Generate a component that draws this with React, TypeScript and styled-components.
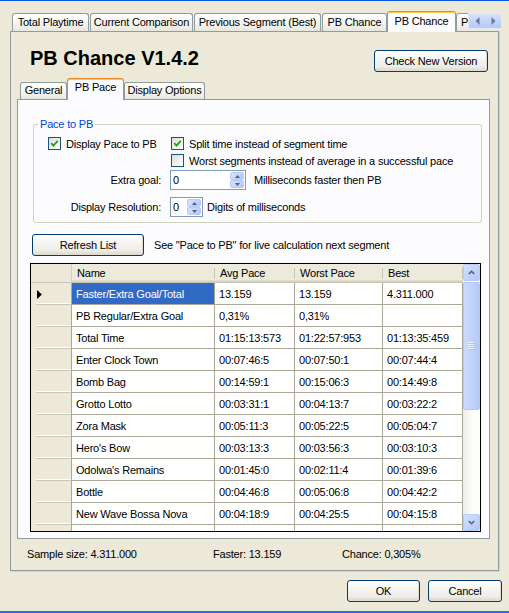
import React from "react";
import styled, { createGlobalStyle } from "styled-components";

const GlobalStyle = createGlobalStyle`
  html, body { margin: 0; padding: 0; background: #ECE9D8; }
  body {
    font-family: "Liberation Sans", Arial, sans-serif;
    font-size: 11px;
    letter-spacing: -0.2px;
    color: #000;
  }
  * { box-sizing: border-box; }
`;

const Window = styled.div`
  width: 509px;
  height: 613px;
  border-top: 1px solid #0A5AE6;
  border-bottom: 2px solid #2A6CEB;
  padding: 10px 10px 0 10px;
  display: flex;
  flex-direction: column;
  overflow: hidden;
  background: #ECE9D8;
`;

/* ---------- outer tabs ---------- */
const TabRow = styled.div`
  display: flex;
  height: 20px;
  margin: 0 -3px 0 2px;
  position: relative;
  z-index: 2;
`;

const TabViewport = styled.div`
  flex: 1;
  display: flex;
  align-items: flex-end;
  overflow: hidden;
  height: 21px;
  margin-bottom: -1px;
`;

const OuterTab = styled.div<{ $active?: boolean; $w?: number; $left?: boolean }>`
  flex: 0 0 auto;
  width: ${(p) => (p.$w ? `${p.$w}px` : "auto")};
  height: ${(p) => (p.$active ? 21 : 18)}px;
  margin: ${(p) => (p.$active ? "0 0 0 -1px" : "0 1px 1px 0")};
  padding: ${(p) => (p.$active ? "1px 0 0" : "0")} ${(p) => (p.$left ? "4px" : "0")};
  border: 1px solid #919b9c;
  border-bottom: none;
  border-top-color: ${(p) => (p.$active ? "#E68B2C" : "#919b9c")};
  border-radius: 3px 3px 0 0;
  background: ${(p) =>
    p.$active
      ? "#FCFCFE"
      : "linear-gradient(#FFFFFF 0%, #F7F7F4 45%, #EEEDE7 80%, #E6E5DE 100%)"};
  box-shadow: ${(p) => (p.$active ? "inset 0 1px 0 #FFC73C" : "none")};
  text-align: ${(p) => (p.$left ? "left" : "center")};
  line-height: 17px;
  white-space: nowrap;
`;

const TabScroller = styled.div`
  flex: 0 0 34px;
  height: 16px;
  margin-top: 2px;
  display: flex;
  border: 1px solid #E4EAF8;
  background: #C8D6F7;
`;

const ScrollerBtn = styled.div`
  flex: 1;
  display: flex;
  align-items: center;
  justify-content: center;
  background: linear-gradient(#D7E1FA, #C2D2F6 60%, #B7CAF3);
`;

/* ---------- outer panel ---------- */
const OuterPanel = styled.div`
  height: 540px;
  border: 1px solid #919b9c;
  background: #ECE9D8;
  display: flex;
  flex-direction: column;
  box-shadow: 1px 1px 0 #D7D4C6;
`;

const Header = styled.div`
  display: flex;
  justify-content: space-between;
  align-items: flex-start;
  height: 24px;
  margin: 14px 10px 0 19px;
`;

const Title = styled.h1`
  margin: 0;
  font-size: 20px;
  line-height: 24px;
  font-weight: bold;
  letter-spacing: 0;
`;

const Button = styled.div<{ $w: number; $mt?: number; $ml?: number }>`
  flex: 0 0 auto;
  width: ${(p) => p.$w}px;
  height: 22px;
  margin-top: ${(p) => p.$mt ?? 0}px;
  margin-left: ${(p) => p.$ml ?? 0}px;
  border: 1px solid #003C74;
  border-radius: 3px;
  background: linear-gradient(#FFFFFF 0%, #F5F4F0 45%, #ECEBE6 80%, #D9D4C9 100%);
  box-shadow: inset -1px -1px 0 #E0DDD3;
  display: flex;
  align-items: center;
  justify-content: center;
  white-space: nowrap;
`;

/* ---------- inner tabs ---------- */
const InnerControl = styled.div`
  margin: 8px 8px 0 6px;
  display: flex;
  flex-direction: column;
`;

const InnerStrip = styled.div`
  display: flex;
  align-items: flex-end;
  height: 21px;
  padding-left: 3px;
  position: relative;
  z-index: 1;
`;

const InnerTab = styled.div<{ $active?: boolean; $w: number }>`
  flex: 0 0 auto;
  width: ${(p) => p.$w}px;
  height: ${(p) => (p.$active ? 22 : 17)}px;
  margin-bottom: ${(p) => (p.$active ? -1 : 0)}px;
  padding-top: ${(p) => (p.$active ? 1 : 0)}px;
  border: 1px solid #919b9c;
  border-bottom: none;
  border-top-color: ${(p) => (p.$active ? "#E68B2C" : "#919b9c")};
  border-radius: 3px 3px 0 0;
  background: ${(p) =>
    p.$active
      ? "#FCFCFE"
      : "linear-gradient(#FFFFFF 0%, #F7F7F4 45%, #EEEDE7 80%, #E6E5DE 100%)"};
  box-shadow: ${(p) => (p.$active ? "inset 0 1px 0 #FFC73C" : "none")};
  text-align: center;
  line-height: 15px;
  white-space: nowrap;
`;

const InnerPanel = styled.div`
  height: 440px;
  border: 1px solid #919b9c;
  background: #FCFCFE;
  display: flex;
  flex-direction: column;
`;

/* ---------- group box ---------- */
const GroupBox = styled.div`
  position: relative;
  height: 99px;
  margin: 24px 7px 0 15px;
  border: 1px solid #D0D0BF;
  border-radius: 3px;
  padding-top: 10px;
`;

const GroupTitle = styled.span`
  position: absolute;
  top: -8px;
  left: 4px;
  padding: 0 2px;
  line-height: 14px;
  background: #FCFCFE;
  color: #0046D5;
`;

const FormRow = styled.div<{ $h: number; $pl?: number; $mt?: number }>`
  display: flex;
  align-items: center;
  height: ${(p) => p.$h}px;
  padding-left: ${(p) => p.$pl ?? 0}px;
  margin-top: ${(p) => p.$mt ?? 0}px;
`;

const CheckItem = styled.div<{ $w?: number }>`
  display: flex;
  align-items: center;
  gap: 5px;
  width: ${(p) => (p.$w ? `${p.$w}px` : "auto")};
  white-space: nowrap;
`;

const Box = styled.span`
  width: 13px;
  height: 13px;
  flex: 0 0 13px;
  border: 1px solid #1C5180;
  background: linear-gradient(135deg, #DCDCD7 0%, #F0F0EC 55%, #FFFFFF 100%);
  display: flex;
  align-items: center;
  justify-content: center;
`;

const FieldLabel = styled.span`
  width: 127px;
  margin-right: 9px;
  text-align: right;
  white-space: nowrap;
`;

const Spinner = styled.div<{ $w: number }>`
  width: ${(p) => p.$w}px;
  height: 20px;
  border: 1px solid #7F9DB9;
  background: #fff;
  display: flex;
`;

const SpinValue = styled.span`
  flex: 1;
  padding-left: 2px;
  line-height: 18px;
`;

const SpinButtons = styled.div`
  flex: 0 0 15px;
  display: flex;
  flex-direction: column;
  padding: 1px 1px 1px 0;
`;

const SpinBtn = styled.div`
  flex: 1;
  border: 1px solid #BACBF3;
  border-radius: 2px;
  background: linear-gradient(135deg, #D8E3FC, #C0D2FB 60%, #B1C7F6);
  display: flex;
  align-items: center;
  justify-content: center;
`;

const Hint = styled.span<{ $ml: number }>`
  margin-left: ${(p) => p.$ml}px;
  white-space: nowrap;
`;

/* ---------- refresh row ---------- */
const RefreshRow = styled.div`
  display: flex;
  align-items: center;
  height: 22px;
  margin: 11px 0 0 14px;
`;

/* ---------- data grid ---------- */
const Grid = styled.div`
  height: 269px;
  margin: 7px 8px 0 12px;
  border: 1px solid #000;
  display: flex;
  overflow: hidden;
`;

const GridBody = styled.div`
  flex: 1;
  overflow: hidden;
  background: #fff;
`;

const HeaderRow = styled.div`
  display: flex;
  height: 19px;
`;

const HeaderCell = styled.div<{ $w: number }>`
  flex: 0 0 ${(p) => p.$w}px;
  height: 19px;
  padding-left: 5px;
  line-height: 18px;
  background:
    linear-gradient(#C7C5B2, #C7C5B2) no-repeat right 4px / 1px 11px,
    #EBEADB;
  box-shadow: inset 0 -1px #CBC7B8, inset 0 -2px #D6D2C2, inset 0 -3px #E2DECD;
  white-space: nowrap;
`;

const Corner = styled.div`
  flex: 0 0 41px;
  height: 19px;
  background: #ECE9D8;
  border-right: 1px solid #D6D2C2;
  box-shadow: inset 0 -1px #CBC7B8;
`;

const GridRow = styled.div`
  display: flex;
  height: 22px;
`;

const RowHeader = styled.div`
  flex: 0 0 41px;
  height: 22px;
  border-right: 1px solid #ACA899;
  display: flex;
  align-items: center;
  padding-left: 6px;
  background:
    linear-gradient(#FFFFFF, #FFFFFF) no-repeat 5px calc(100% - 1px) / calc(100% - 5px) 1px,
    linear-gradient(#CBC7B8, #CBC7B8) no-repeat 5px 100% / calc(100% - 5px) 1px,
    #ECE9D8;
`;

const Cell = styled.div<{ $w: number; $selected?: boolean }>`
  flex: 0 0 ${(p) => p.$w}px;
  height: 22px;
  padding-left: 4px;
  line-height: 22px;
  border-right: 1px solid #ACA899;
  border-bottom: 1px solid #ACA899;
  background: ${(p) => (p.$selected ? "#316AC5" : "#fff")};
  color: ${(p) => (p.$selected ? "#fff" : "#000")};
  white-space: nowrap;
  overflow: hidden;
`;

const ScrollBar = styled.div`
  flex: 0 0 17px;
  display: flex;
  flex-direction: column;
  background: linear-gradient(to right, #EEEDE5, #FEFEFB 60%);
`;

const ScrollBtn = styled.div`
  flex: 0 0 17px;
  border: 1px solid #B9CBF4;
  border-radius: 2px;
  background: linear-gradient(135deg, #D6E2FD, #C1D3FB 55%, #B0C6F6);
  display: flex;
  align-items: center;
  justify-content: center;
`;

const Track = styled.div`
  flex: 1;
  padding-top: 1px;
`;

const Thumb = styled.div`
  height: 128px;
  border: 1px solid #B2C7F5;
  border-radius: 2px;
  background: linear-gradient(to right, #CCDAFC, #C1D3FB 50%, #B4C9F7);
  display: flex;
  align-items: center;
  justify-content: center;
`;

/* ---------- status + footer ---------- */
const StatusRow = styled.div`
  display: grid;
  grid-template-columns: 186px 129px auto;
  height: 14px;
  line-height: 14px;
  margin: 8px 0 0 16px;
  white-space: nowrap;
`;

const Footer = styled.div`
  display: flex;
  justify-content: flex-end;
  gap: 8px;
  margin: 9px -3px 0 0;
`;

/* ---------- icons ---------- */
const Check = () => (
  <svg width="9" height="9" viewBox="0 0 9 9">
    <path d="M1.2 4.2 L3.4 6.6 L7.8 1.8" fill="none" stroke="#21A121" strokeWidth="1.8" />
  </svg>
);

const CheckBox = ({ checked }: { checked?: boolean }) => <Box>{checked ? <Check /> : null}</Box>;

const Chevron = ({ dir }: { dir: "up" | "down" }) => (
  <svg width="7" height="5" viewBox="0 0 7 5">
    <path
      d={dir === "up" ? "M0.8 4 L3.5 1.3 L6.2 4" : "M0.8 1 L3.5 3.7 L6.2 1"}
      fill="none"
      stroke="#4D6185"
      strokeWidth="1.6"
    />
  </svg>
);

const SmallArrow = ({ dir }: { dir: "up" | "down" }) => (
  <svg width="5" height="3" viewBox="0 0 5 3">
    <path d={dir === "up" ? "M0 3 L2.5 0 L5 3Z" : "M0 0 L2.5 3 L5 0Z"} fill="#4D6185" />
  </svg>
);

const SideArrow = ({ dir }: { dir: "left" | "right" }) => (
  <svg width="5" height="8" viewBox="0 0 5 8">
    <path d={dir === "left" ? "M4.5 0 L0.5 4 L4.5 8Z" : "M0.5 0 L4.5 4 L0.5 8Z"} fill="#6A7AA2" />
  </svg>
);

const RowMarker = () => (
  <svg width="5" height="9" viewBox="0 0 5 9">
    <path d="M0 0 L5 4.5 L0 9Z" fill="#000" />
  </svg>
);

const Grip = () => (
  <svg width="7" height="8" viewBox="0 0 7 8">
    {[0, 2, 4, 6].map((y) => (
      <g key={y}>
        <rect x="0" y={y} width="6" height="1" fill="#EEF4FE" />
        <rect x="1" y={y + 1} width="6" height="1" fill="#A9C2F6" />
      </g>
    ))}
  </svg>
);

/* ---------- data ---------- */
const COLS = [143, 80, 88, 80];

const ROWS: string[][] = [
  ["Faster/Extra Goal/Total", "13.159", "13.159", "4.311.000"],
  ["PB Regular/Extra Goal", "0,31%", "0,31%", ""],
  ["Total Time", "01:15:13:573", "01:22:57:953", "01:13:35:459"],
  ["Enter Clock Town", "00:07:46:5", "00:07:50:1", "00:07:44:4"],
  ["Bomb Bag", "00:14:59:1", "00:15:06:3", "00:14:49:8"],
  ["Grotto Lotto", "00:03:31:1", "00:04:13:7", "00:03:22:2"],
  ["Zora Mask", "00:05:11:3", "00:05:22:5", "00:05:04:7"],
  ["Hero's Bow", "00:03:13:3", "00:03:56:3", "00:03:10:3"],
  ["Odolwa's Remains", "00:01:45:0", "00:02:11:4", "00:01:39:6"],
  ["Bottle", "00:04:46:8", "00:05:06:8", "00:04:42:2"],
  ["New Wave Bossa Nova", "00:04:18:9", "00:04:25:5", "00:04:15:8"],
  ["", "", "", ""],
];

const HEADERS = ["Name", "Avg Pace", "Worst Pace", "Best"];

export default function App() {
  return (
    <>
      <GlobalStyle />
      <Window>
        <TabRow>
          <TabViewport>
            <OuterTab $w={77}>Total Playtime</OuterTab>
            <OuterTab $w={103}>Current Comparison</OuterTab>
            <OuterTab $w={127}>Previous Segment (Best)</OuterTab>
            <OuterTab $w={65}>PB Chance</OuterTab>
            <OuterTab $w={69} $active>
              PB Chance
            </OuterTab>
            <OuterTab $w={60} $left>
              P
            </OuterTab>
          </TabViewport>
          <TabScroller>
            <ScrollerBtn>
              <SideArrow dir="left" />
            </ScrollerBtn>
            <ScrollerBtn>
              <SideArrow dir="right" />
            </ScrollerBtn>
          </TabScroller>
        </TabRow>

        <OuterPanel>
          <Header>
            <Title>PB Chance V1.4.2</Title>
            <Button $w={114} $mt={4}>
              Check New Version
            </Button>
          </Header>

          <InnerControl>
            <InnerStrip>
              <InnerTab $w={47}>General</InnerTab>
              <InnerTab $w={57} $active>
                PB Pace
              </InnerTab>
              <InnerTab $w={81}>Display Options</InnerTab>
            </InnerStrip>

            <InnerPanel>
              <GroupBox>
                <GroupTitle>Pace to PB</GroupTitle>
                <FormRow $h={17} $pl={14}>
                  <CheckItem $w={123}>
                    <CheckBox checked />
                    Display Pace to PB
                  </CheckItem>
                  <CheckItem>
                    <CheckBox checked />
                    Split time instead of segment time
                  </CheckItem>
                </FormRow>
                <FormRow $h={17} $pl={137}>
                  <CheckItem>
                    <CheckBox />
                    Worst segments instead of average in a successful pace
                  </CheckItem>
                </FormRow>
                <FormRow $h={20} $mt={1}>
                  <FieldLabel>Extra goal:</FieldLabel>
                  <Spinner $w={76}>
                    <SpinValue>0</SpinValue>
                    <SpinButtons>
                      <SpinBtn>
                        <SmallArrow dir="up" />
                      </SpinBtn>
                      <SpinBtn>
                        <SmallArrow dir="down" />
                      </SpinBtn>
                    </SpinButtons>
                  </Spinner>
                  <Hint $ml={8}>Milliseconds faster then PB</Hint>
                </FormRow>
                <FormRow $h={20} $mt={7}>
                  <FieldLabel>Display Resolution:</FieldLabel>
                  <Spinner $w={33}>
                    <SpinValue>0</SpinValue>
                    <SpinButtons>
                      <SpinBtn>
                        <SmallArrow dir="up" />
                      </SpinBtn>
                      <SpinBtn>
                        <SmallArrow dir="down" />
                      </SpinBtn>
                    </SpinButtons>
                  </Spinner>
                  <Hint $ml={4}>Digits of milliseconds</Hint>
                </FormRow>
              </GroupBox>

              <RefreshRow>
                <Button $w={112}>Refresh List</Button>
                <Hint $ml={10}>See "Pace to PB" for live calculation next segment</Hint>
              </RefreshRow>

              <Grid>
                <GridBody>
                  <HeaderRow>
                    <Corner />
                    {HEADERS.map((h, i) => (
                      <HeaderCell key={h} $w={COLS[i]}>
                        {h}
                      </HeaderCell>
                    ))}
                  </HeaderRow>
                  {ROWS.map((row, r) => (
                    <GridRow key={r}>
                      <RowHeader>{r === 0 ? <RowMarker /> : null}</RowHeader>
                      {row.map((v, c) => (
                        <Cell key={c} $w={COLS[c]} $selected={r === 0 && c === 0}>
                          {v}
                        </Cell>
                      ))}
                    </GridRow>
                  ))}
                </GridBody>
                <ScrollBar>
                  <ScrollBtn>
                    <Chevron dir="up" />
                  </ScrollBtn>
                  <Track>
                    <Thumb>
                      <Grip />
                    </Thumb>
                  </Track>
                  <ScrollBtn>
                    <Chevron dir="down" />
                  </ScrollBtn>
                </ScrollBar>
              </Grid>
            </InnerPanel>
          </InnerControl>

          <StatusRow>
            <span>Sample size: 4.311.000</span>
            <span>Faster: 13.159</span>
            <span>Chance: 0,305%</span>
          </StatusRow>
        </OuterPanel>

        <Footer>
          <Button $w={73}>OK</Button>
          <Button $w={74}>Cancel</Button>
        </Footer>
      </Window>
    </>
  );
}
